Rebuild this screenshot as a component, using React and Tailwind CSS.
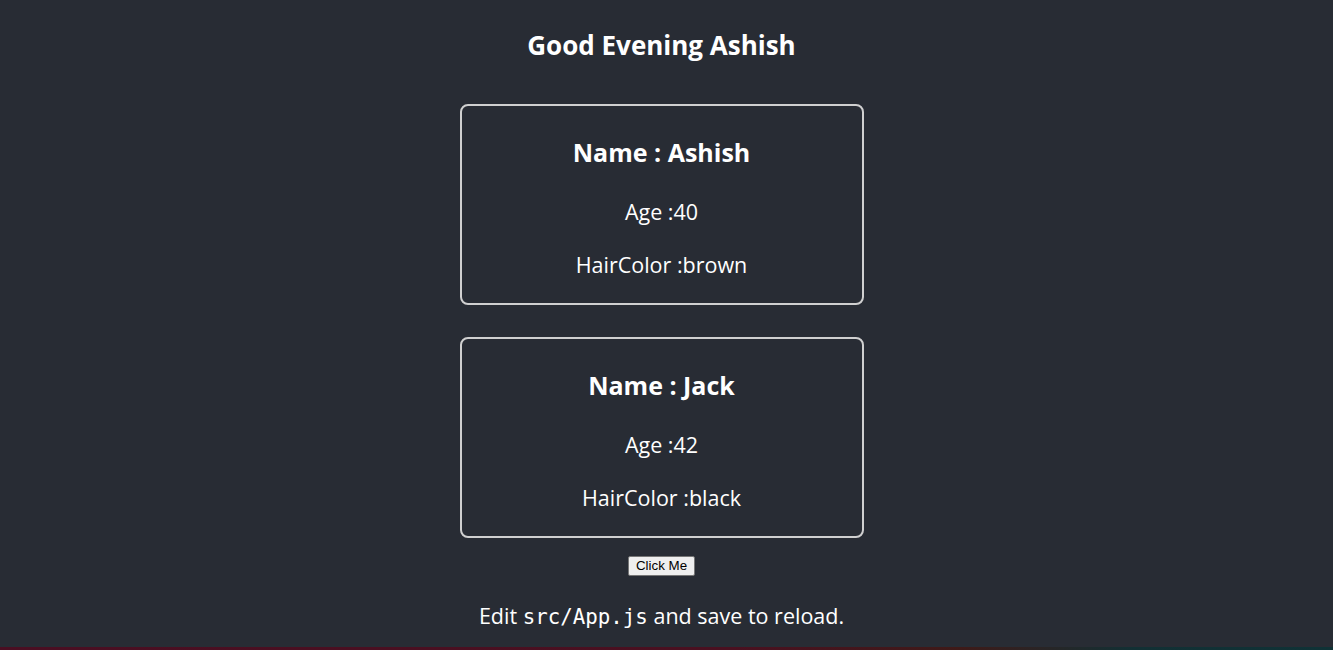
import React from "react";

function Card({ name, age, hair }) {
  return (
    <div className="w-[404px] h-[201px] border-2 border-[#d0d0d0] rounded-lg flex flex-col items-center">
      <div className="mt-[30px] text-[25px] leading-[32px] font-bold">Name : {name}</div>
      <div className="mt-[30px] text-[21.5px] leading-[28px]">Age :{age}</div>
      <div className="mt-[25px] text-[21.5px] leading-[28px]">HairColor :{hair}</div>
    </div>
  );
}

export default function App() {
  return (
    <div
      className="h-[650px] bg-[#282c34] text-white flex flex-col overflow-hidden"
      style={{ fontFamily: '"Open Sans", "Noto Sans", sans-serif' }}
    >
      <div className="flex-1 flex flex-col items-center pr-[10px]">
        <h2 className="mt-[29px] text-[26px] leading-[32px] font-bold">Good Evening Ashish</h2>
        <div className="mt-[43px]">
          <Card name="Ashish" age="40" hair="brown" />
        </div>
        <div className="mt-[32px]">
          <Card name="Jack" age="42" hair="black" />
        </div>
        <button
          className="mt-[18px] h-[20px] px-[7px] bg-[#efefef] border border-[#767676] rounded-[2px] text-black text-[13.33px] leading-[16px]"
          style={{ fontFamily: '"Liberation Sans", Arial, sans-serif' }}
        >
          Click Me
        </button>
        <p className="mt-[26px] text-[21.5px] leading-[28px]">
          Edit <code className="text-[20.8px]" style={{ fontFamily: '"DejaVu Sans Mono", "Liberation Mono", monospace' }}>src/App.js</code> and save to reload.
        </p>
      </div>
      <div className="h-[3px] w-full bg-[linear-gradient(to_right,#4a0e22_0%,#4a1020_55%,#3e1a18_72%,#123034_85%,#0f3236_100%)]" />
    </div>
  );
}
